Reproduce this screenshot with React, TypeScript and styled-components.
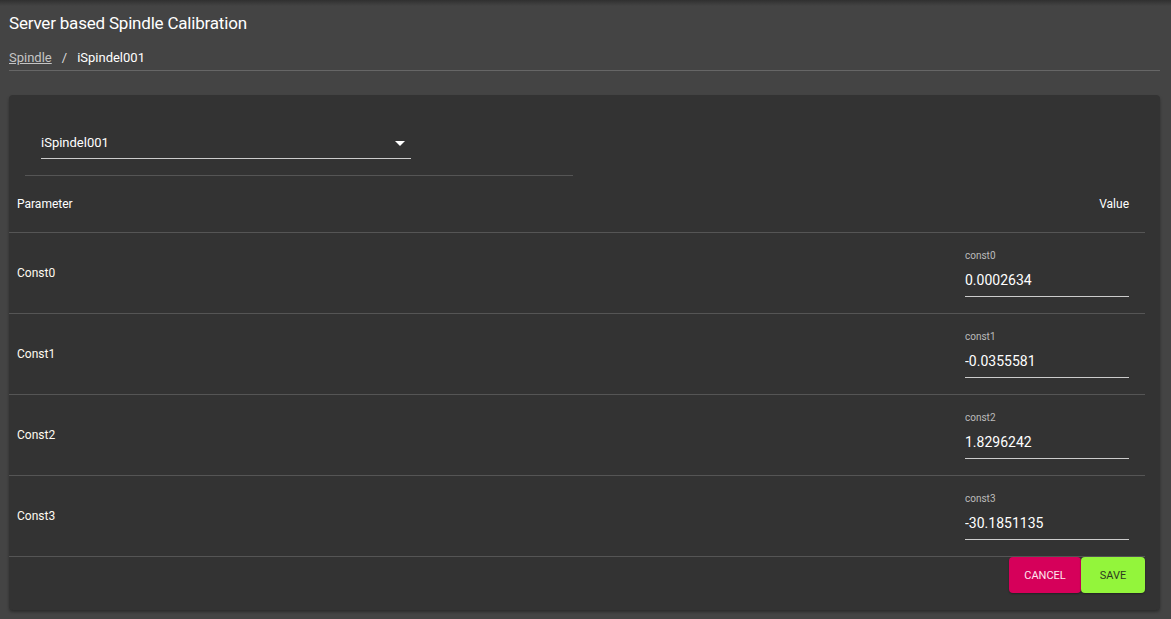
import styled, { createGlobalStyle } from "styled-components";

const GlobalStyle = createGlobalStyle`
  html, body {
    margin: 0;
    padding: 0;
    background-color: #444444;
    font-family: Roboto, "Noto Sans", sans-serif;
    color: #ffffff;
  }
  * {
    box-sizing: border-box;
  }
`;

const Page = styled.div`
  min-height: 619px;
  padding: 0 11px 0 9px;
  background: linear-gradient(#303030 0px, #444444 6px, #444444 100%);
`;

const Title = styled.h1`
  margin: 0;
  padding-top: 12px;
  height: 50px;
  font-size: 17px;
  letter-spacing: -0.2px;
  font-weight: 400;
  line-height: 22px;
  color: #ffffff;
`;

const Crumbs = styled.nav`
  display: flex;
  align-items: center;
  gap: 8px;
  height: 16px;
  font-size: 13px;
  line-height: 16px;
`;

const CrumbLink = styled.a`
  color: #c4c4c4;
  text-decoration: underline;
`;

const CrumbSep = styled.span`
  color: #dddddd;
  padding: 0 2px;
`;

const CrumbCurrent = styled.span`
  color: #ffffff;
`;

const Rule = styled.hr`
  margin: 4px 0 0;
  border: none;
  border-top: 1px solid #666666;
`;

const Panel = styled.section`
  margin-top: 24px;
  background-color: #333333;
  border-radius: 4px;
  box-shadow: 0 2px 3px rgba(0, 0, 0, 0.35);
  padding: 0 15px 17px 0;
`;

const SelectArea = styled.div`
  margin: 0 0 0 16px;
  width: 548px;
  padding: 35px 0 16px 16px;
  border-bottom: 1px solid #555555;
`;

const Select = styled.div`
  display: flex;
  align-items: flex-end;
  justify-content: space-between;
  width: 370px;
  height: 29px;
  padding: 0 6px 6px 0;
  border-bottom: 1px solid #cccccc;
  font-size: 13px;
  line-height: 18px;
`;

const Caret = styled.span`
  width: 0;
  height: 0;
  margin-bottom: 6px;
  border-left: 5px solid transparent;
  border-right: 5px solid transparent;
  border-top: 5px solid #ffffff;
`;

const Table = styled.div`
  display: flex;
  flex-direction: column;
`;

const HeadRow = styled.div`
  display: flex;
  justify-content: space-between;
  align-items: center;
  height: 57px;
  padding: 0 16px 0 8px;
  font-size: 12px;
  border-bottom: 1px solid #555555;
`;

const Row = styled.div`
  display: flex;
  justify-content: space-between;
  align-items: center;
  height: 81px;
  padding: 0 16px 0 8px;
  border-bottom: 1px solid #555555;
`;

const ParamName = styled.span`
  font-size: 12px;
  color: #fffaf0;
`;

const Field = styled.label`
  display: flex;
  flex-direction: column;
  align-self: flex-start;
  width: 164px;
  margin-top: 16px;
`;

const FieldLabel = styled.span`
  font-size: 10px;
  line-height: 14px;
  color: #bbbbbb;
`;

const FieldInput = styled.input`
  height: 34px;
  background: transparent;
  border: none;
  border-bottom: 1px solid #cccccc;
  color: #ffffff;
  font-family: inherit;
  font-size: 14px;
  line-height: 18px;
  padding: 8px 0 7px;
  outline: none;
`;

const Actions = styled.div`
  display: flex;
  justify-content: flex-end;
`;

const Button = styled.button<{ $tone: "cancel" | "save" }>`
  width: ${(p) => (p.$tone === "save" ? "64px" : "72px")};
  height: 36px;
  padding: 0;
  border: none;
  border-radius: 4px;
  font-family: inherit;
  font-size: 11px;
  text-transform: uppercase;
  cursor: pointer;
  background-color: ${(p) => (p.$tone === "save" ? "#93f53b" : "#d6005a")};
  color: ${(p) => (p.$tone === "save" ? "#2e3b20" : "#ffe6ef")};
  box-shadow: 0 1px 2px rgba(0, 0, 0, 0.35);
`;

const constants = [
  { name: "Const0", key: "const0", value: "0.0002634" },
  { name: "Const1", key: "const1", value: "-0.0355581" },
  { name: "Const2", key: "const2", value: "1.8296242" },
  { name: "Const3", key: "const3", value: "-30.1851135" },
];

function App() {
  return (
    <>
      <GlobalStyle />
      <Page>
        <Title>Server based Spindle Calibration</Title>
        <Crumbs>
          <CrumbLink href="#">Spindle</CrumbLink>
          <CrumbSep>/</CrumbSep>
          <CrumbCurrent>iSpindel001</CrumbCurrent>
        </Crumbs>
        <Rule />
        <Panel>
          <SelectArea>
            <Select>
              <span>iSpindel001</span>
              <Caret />
            </Select>
          </SelectArea>
          <Table>
            <HeadRow>
              <span>Parameter</span>
              <span>Value</span>
            </HeadRow>
            {constants.map((c) => (
              <Row key={c.key}>
                <ParamName>{c.name}</ParamName>
                <Field>
                  <FieldLabel>{c.key}</FieldLabel>
                  <FieldInput defaultValue={c.value} />
                </Field>
              </Row>
            ))}
          </Table>
          <Actions>
            <Button $tone="cancel">Cancel</Button>
            <Button $tone="save">Save</Button>
          </Actions>
        </Panel>
      </Page>
    </>
  );
}

export default App;
